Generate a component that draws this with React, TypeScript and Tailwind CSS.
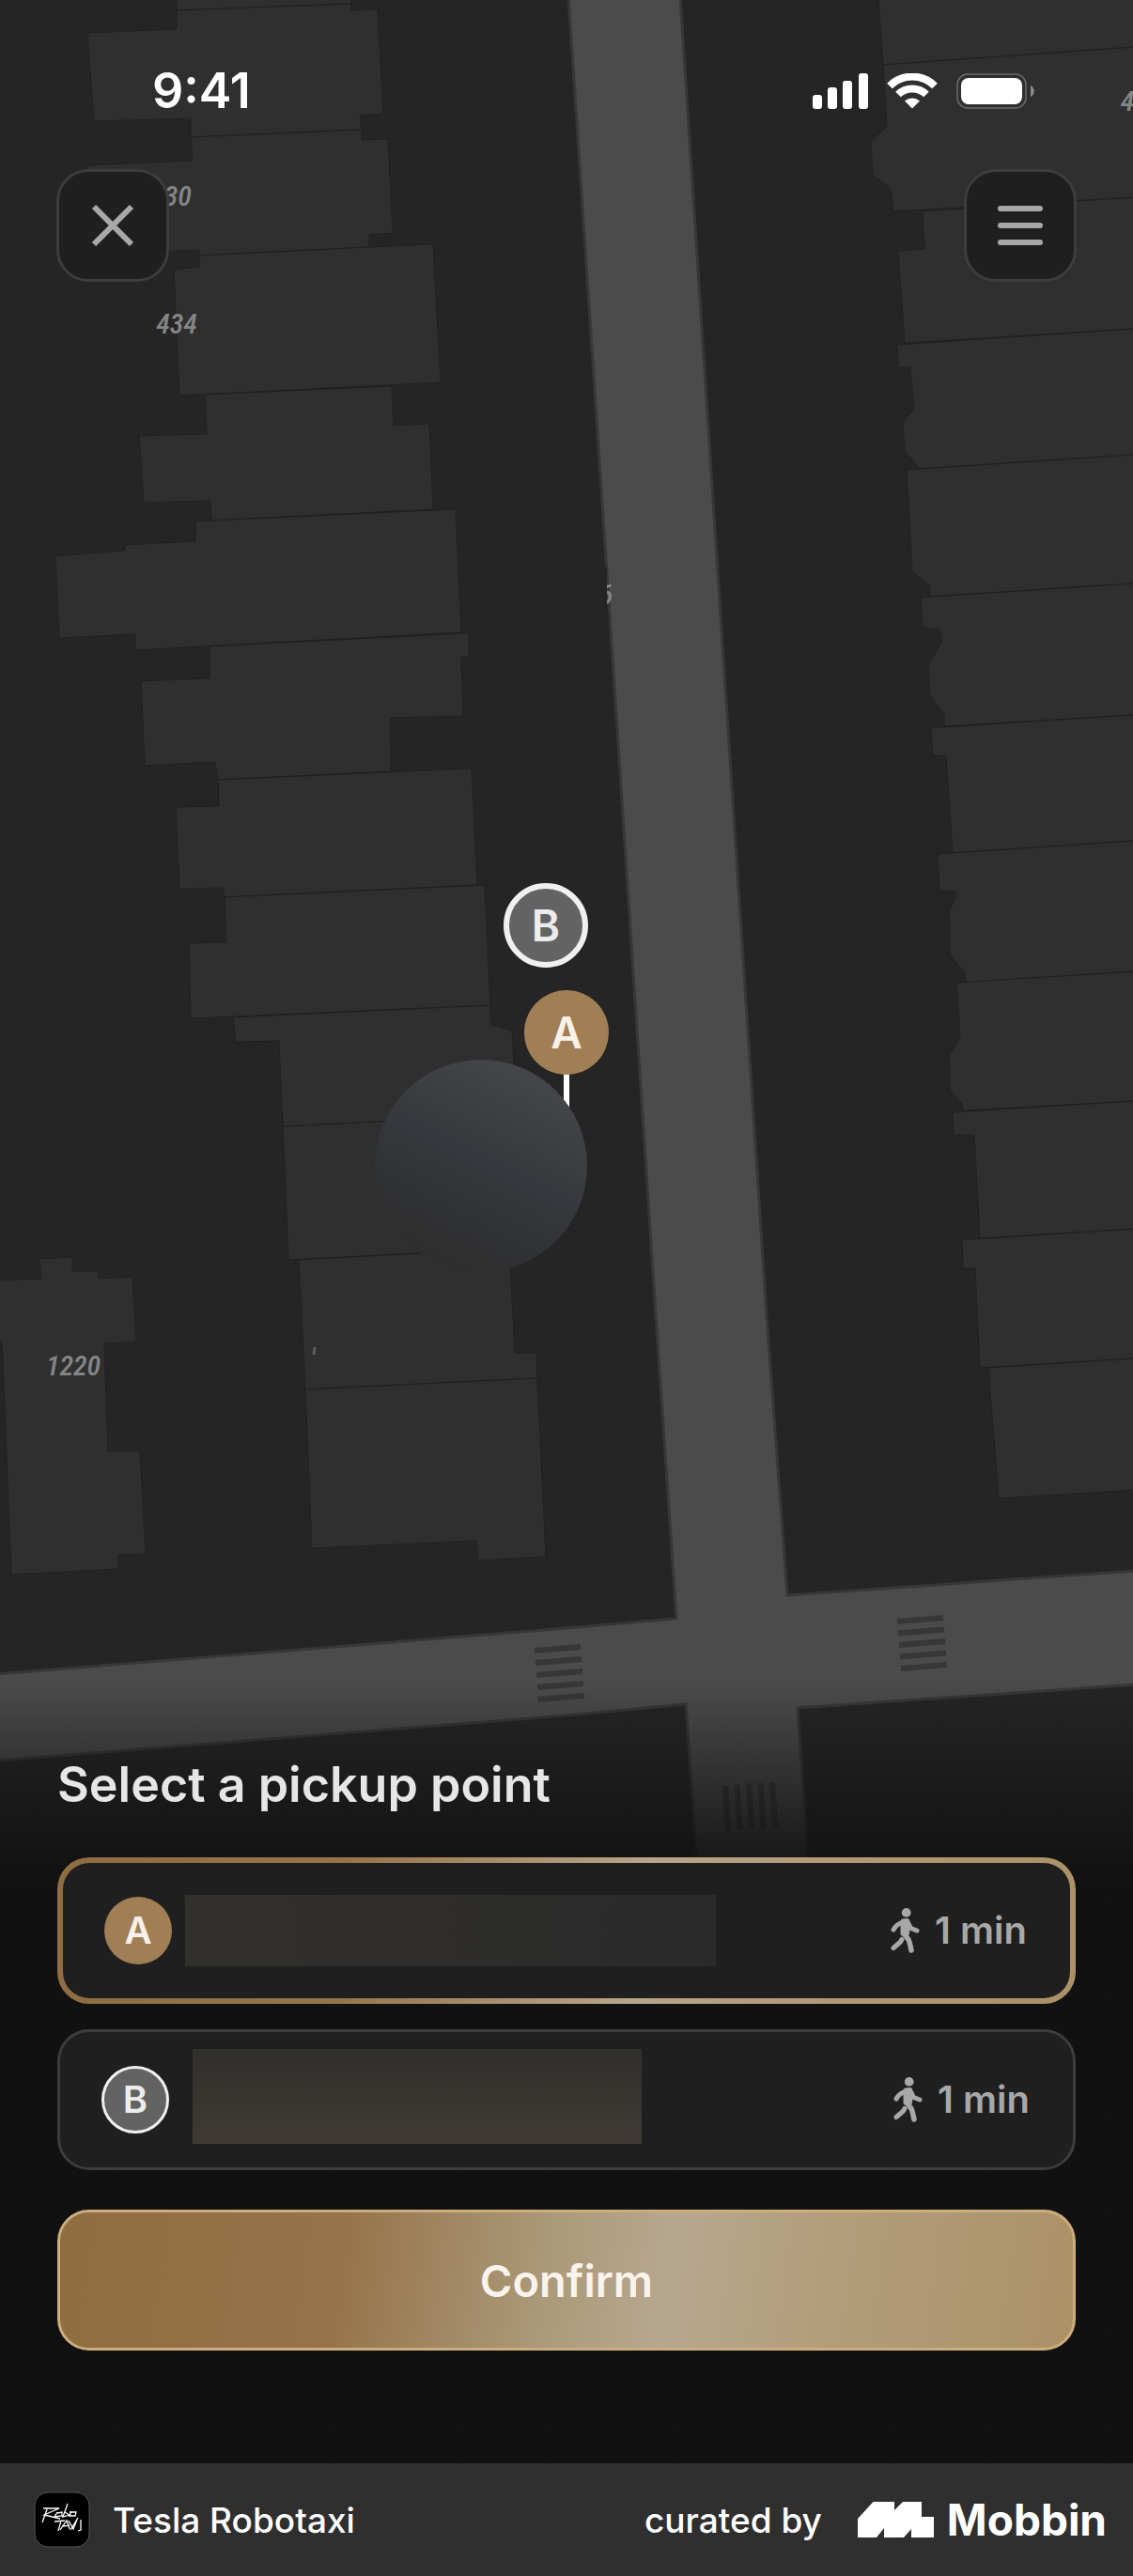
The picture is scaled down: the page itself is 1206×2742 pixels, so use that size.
import { useState } from "react"

const pickupPoints = [
  { id: "A", walk: "1 min" },
  { id: "B", walk: "1 min" },
]

const buildings = [
  "188,-2 188,11 374,4 374,-2",
  "188,11 374,4 374,11 402,10 408,121 383,123 385,138 203,146 203,126 100,129 93,35 188,31",
  "203,146 385,138 385,149 413,148 418,248 393,250 393,263 212,272 212,266 98,271 92,176 205,171",
  "212,272 393,263 461,260 469,407 191,421 185,287 212,284",
  "218,420 417,411 419,453 457,451 461,542 225,554 224,533 153,535 148,464 220,462",
  "208,555 485,542 491,673 144,692 144,675 63,679 59,592 133,586 133,580 208,576",
  "223,688 499,674 499,699 491,700 493,762 415,764 416,821 232,830 229,811 154,815 150,725 223,722",
  "232,830 502,818 508,942 239,955 237,945 191,946 187,859 233,858",
  "239,955 516,942 522,1070 203,1084 201,1004 241,1003",
  "248,1083 522,1070 523,1091 545,1097 550,1187 301,1199 297,1108 251,1109",
  "301,1199 538,1187 542,1329 307,1341",
  "318,1341 542,1329 548,1440 571,1440 572,1467 325,1479",
  "325,1479 572,1467 581,1657 509,1661 507,1640 332,1648",
  "-2,1363 44,1361 42,1340 77,1338 77,1353 105,1353 105,1361 141,1359 145,1428 111,1430 115,1545 149,1544 155,1654 126,1655 126,1670 12,1676 2,1428 -2,1428",
  "935,-2 1208,-2 1208,50 940,69",
  "940,69 1208,50 1208,210 951,225 948,201 929,186 927,150 944,135",
  "982,225 1208,210 1208,350 963,365 956,267 984,265",
  "955,367 1208,350 1208,484 979,499 963,480 961,449 973,435 969,391 956,391",
  "965,500 1208,484 1208,621 990,635 990,624 971,608",
  "980,636 1208,621 1208,761 1005,773 1005,760 990,740 988,707 1003,683 1000,670 982,668",
  "991,775 1208,761 1208,895 1014,908 1007,805 993,804",
  "998,909 1208,895 1208,1034 1028,1046 1027,1036 1011,1015 1010,970 1018,954 1017,949 1000,948",
  "1018,1046 1208,1034 1208,1172 1025,1182 1024,1175 1011,1160 1010,1123 1022,1104",
  "1014,1184 1208,1172 1208,1308 1043,1318 1037,1208 1015,1208",
  "1024,1320 1208,1308 1208,1446 1043,1456 1038,1350 1025,1350",
  "1052,1456 1208,1446 1208,1586 1063,1595",
]

const stripes = [0, 1, 2, 3, 4]

function StreetMap() {
  return (
    <svg
      className="absolute inset-0 size-full"
      viewBox="0 0 1206 2622"
      preserveAspectRatio="xMidYMin slice"
      role="img"
      aria-label="Map of pickup points"
    >
      <defs>
        <linearGradient id="ball" x1="0.75" y1="0.05" x2="0.3" y2="0.95">
          <stop offset="0" stopColor="#454649" />
          <stop offset="0.5" stopColor="#36383d" />
          <stop offset="0.8" stopColor="#303133" />
          <stop offset="1" stopColor="#2e2e2e" />
        </linearGradient>
        <clipPath id="tile">
          <rect x="646" y="600" width="40" height="60" />
        </clipPath>
      </defs>
      <rect width="1206" height="2622" fill="#252525" />
      <g fill="#2f2f2f" stroke="#212121" strokeWidth="1">
        {buildings.map((points) => (
          <polygon key={points} points={points} />
        ))}
      </g>

      <path
        d="M605-4 652 700 698 1400 720 1723 603 1733-4 1782V1874L603 1826 730 1814 741 1974 744 2040H864L860 1974 849 1818 1210 1793V1672L838 1698 816 1400 770 700 724-4Z"
        fill="#4b4b4b"
        stroke="#373737"
        strokeWidth="3"
      />
      <path d="M642 603h4v44l3 12-4-2Z" fill="#252525" />
      <g stroke="#373737" strokeWidth="6">
        {stripes.map((i) => (
          <g key={i}>
            <path d={`M${569 + i} ${1757 + i * 13}l49-4`} />
            <path d={`M${955 + i} ${1726 + i * 12.5}l49-4`} />
            <path d={`M${772 + i * 12.5} ${1901 - i}l3 48`} />
          </g>
        ))}
      </g>

      <g
        fill="#858585"
        fontSize="30"
        fontWeight="500"
        fontStyle="italic"
        textAnchor="middle"
        className="font-['Liberation_Sans_Narrow','Roboto_Condensed',Roboto,sans-serif]"
      >
        <text x="182" y="219">430</text>
        <text x="188" y="355">434</text>
        <text x="78" y="1464">1220</text>
        <text x="1200" y="118">4</text>
        <text x="645" y="643" clipPath="url(#tile)">6</text>
      </g>
      <path d="M335 1434l-1 8" stroke="#5a5a5a" strokeWidth="3" />

      <g fontSize="46" fontWeight="600" textAnchor="middle" className="font-[Inter,sans-serif]">
        <circle cx="581" cy="985" r="42" fill="#636363" stroke="#f0f0f0" strokeWidth="6" />
        <text x="581" y="1002" fill="#ececec">B</text>
        <rect x="600" y="1140" width="6" height="50" fill="#fff" />
        <circle cx="603" cy="1099" r="45" fill="#a07f55" />
        <text x="603" y="1116" fill="#f8f1e9">A</text>
      </g>
      <circle cx="512" cy="1241" r="113" fill="url(#ball)" />
    </svg>
  )
}

function StatusBar() {
  return (
    <div className="flex items-center justify-between pt-[67px] pr-[104px] pl-[162px] text-white">
      <span className="text-[52px] leading-[60px] font-semibold">9:41</span>
      <div className="flex items-center gap-5">
        <svg width="60" height="38" viewBox="0 0 60 38" fill="currentColor" aria-hidden="true">
          <rect x="1" y="23" width="10" height="15" rx="3" />
          <rect x="17" y="15" width="10" height="23" rx="3" />
          <rect x="33" y="8" width="10" height="30" rx="3" />
          <rect x="50" y="0" width="10" height="38" rx="3" />
        </svg>
        <svg width="54" height="38" viewBox="0 0 54 38" aria-hidden="true">
          <g fill="none" stroke="currentColor" strokeWidth="8">
            <path d="M3 13.500A34 34 0 0 1 51 13.500" />
            <path d="M12 22.500A21.500 21.500 0 0 1 42 22.500" />
          </g>
          <path d="M27 37.500 19 29.500A12 12 0 0 1 35 29.500Z" fill="currentColor" />
        </svg>
        <svg width="84" height="38" viewBox="0 0 84 38" aria-hidden="true">
          <rect x="1" y="1" width="73" height="36" rx="11" fill="none" stroke="#6b6b6b" strokeWidth="1.500" />
          <rect x="5" y="5" width="65" height="28" rx="8" fill="currentColor" />
          <path d="M79 13c5 2 5 10 0 12Z" fill="#8a8a8a" />
        </svg>
      </div>
    </div>
  )
}

function WalkIcon() {
  return (
    <svg width="31" height="48" viewBox="0 0 31 48" fill="none" stroke="currentColor" strokeLinecap="round" strokeLinejoin="round" aria-hidden="true">
      <circle cx="16.700" cy="4.900" r="4.900" fill="currentColor" stroke="none" />
      <path d="M14 14.500 8 17.500Q6 18.500 3 23" strokeWidth="5" />
      <path d="M18 14.500 21.500 21.500 28 24" strokeWidth="5" />
      <path d="M13 14 17.500 13.500 18.500 18 17.500 27 13 27Z" fill="currentColor" strokeWidth="5" />
      <path d="M14 27 19 33.500Q20 35 22 45" strokeWidth="5.500" />
      <path d="M12 33.500 10 36.500 3 42.500" strokeWidth="5" />
    </svg>
  )
}

function Sheet() {
  const [selected, setSelected] = useState("A")

  return (
    <form
      className="relative mt-auto bg-linear-to-b from-transparent via-[#111] via-[215px] to-[#111] px-[61px] pt-20 pb-[120px]"
      onSubmit={(e) => e.preventDefault()}
    >
      <fieldset>
        <legend className="mb-[47px] text-[52px] leading-[60px] font-semibold text-[#e6e6e6]">Select a pickup point</legend>
        <div className="flex flex-col gap-[27px]">
          {pickupPoints.map((point) => (
            <label
              key={point.id}
              className={
                selected === point.id
                  ? "flex rounded-[34px] border-6 border-transparent [background:linear-gradient(#1f1f1f,#1f1f1f)_padding-box,linear-gradient(97deg,#8f6d42,#96744a_28%,#b8a48a_57%,#b09570_82%,#ab9166)_border-box]"
                  : "flex rounded-[34px] border-3 border-[#3d3d3d] bg-[#1f1f1f]"
              }
            >
              <input
                type="radio"
                name="pickup"
                value={point.id}
                checked={selected === point.id}
                onChange={() => setSelected(point.id)}
                className="sr-only"
              />
              <span className="flex h-36 flex-1 items-center pr-[46px] pl-11">
                <span
                  className={
                    point.id === "A"
                      ? "flex size-[72px] items-center justify-center rounded-full bg-[#a07f55] text-[40px] leading-none font-semibold text-[#f8f1e9]"
                      : "flex size-[72px] items-center justify-center rounded-full border-3 border-[#f0f0f0] bg-[#636363] text-[40px] leading-none font-semibold text-[#ececec]"
                  }
                >
                  {point.id}
                </span>
                <span
                  className={
                    point.id === "A"
                      ? "ml-3.5 h-[76px] w-[565px] bg-linear-to-r from-[#32302d] to-[#2a2a2a]"
                      : "mb-2 ml-[25px] h-[101px] w-[478px] bg-linear-to-b from-[#302f2c] to-[#403b34]"
                  }
                />
                <span className="ml-auto flex items-center gap-4 text-[40px] leading-none font-semibold text-[#a8a8a8]">
                  <WalkIcon />
                  {point.walk}
                </span>
              </span>
            </label>
          ))}
        </div>
      </fieldset>
      <button
        type="submit"
        className="mt-[42px] h-[150px] w-full rounded-[34px] border-3 border-[#ccae7d] bg-[linear-gradient(98deg,#8f6d40,#96744a_28%,#ab9979_48%,#b7a78f_60%,#b29d7a_76%,#ab9166)] text-[47px] leading-none font-semibold text-[#f8f3ec]"
      >
        Confirm
      </button>
    </form>
  )
}

function Footer() {
  return (
    <footer className="flex h-[120px] items-center justify-between bg-[#2f2f2f] pr-7 pl-9 text-white">
      <div className="flex items-center gap-6">
        <svg width="60" height="60" viewBox="0 0 60 60" aria-hidden="true">
          <rect x="1" y="1" width="58" height="58" rx="14" fill="#000" stroke="#555" strokeWidth="1" />
          <g fill="none" stroke="#fff" strokeWidth="1.300">
            <path d="M10 18 27 18 11 25 28 29M14 19 9 33" />
            <path d="M25 22 22 27 30 26 30 22 25 23M36 13 31 27 38 25 33 22M38 22 45 22 44 26 38 26 40 21" />
            <path d="M22 32 33 31M29 31 26 42M28 41 35 31 38 40M30 37 38 36M37 31 42 40 46 30M39 41 47 28M50 30 50 41 47 42" />
          </g>
        </svg>
        <span className="text-[37px] leading-none font-medium">Tesla Robotaxi</span>
      </div>
      <div className="flex items-center">
        <span className="text-[37px] leading-none font-medium">curated by</span>
        <svg className="mr-3.5 ml-[38px]" width="81" height="38" viewBox="0 0 81 38" fill="currentColor" aria-hidden="true">
          <path d="M16.500 0H39V9L48 0H68V16H81V38H57V29L49 38H28V28L20 38H0V18Z" />
        </svg>
        <span className="text-[46px] leading-none font-bold">Mobbin</span>
      </div>
    </footer>
  )
}

export default function App() {
  return (
    <div className="flex min-h-screen flex-col bg-[#111] font-[Inter,sans-serif]">
      <main className="relative flex flex-1 flex-col overflow-hidden">
        <StreetMap />
        <header className="relative">
          <StatusBar />
          <div className="flex justify-between px-[60px] pt-[53px]">
            <button type="button" aria-label="Close" className="flex size-[120px] items-center justify-center rounded-[34px] border-3 border-[#3d3d3d] bg-[#1f1f1f] text-[#a8a8a8]">
              <svg width="48" height="48" viewBox="0 0 48 48" stroke="currentColor" strokeWidth="6" aria-hidden="true">
                <path d="M4 4 44 44M44 4 4 44" />
              </svg>
            </button>
            <button type="button" aria-label="Menu" className="flex size-[120px] items-center justify-center rounded-[34px] border-3 border-[#3d3d3d] bg-[#1f1f1f] text-[#a8a8a8]">
              <svg width="48" height="48" viewBox="0 0 48 48" stroke="currentColor" strokeWidth="6" strokeLinecap="round" aria-hidden="true">
                <path d="M3 6H45M3 24H45M3 42H45" />
              </svg>
            </button>
          </div>
        </header>
        <Sheet />
      </main>
      <Footer />
    </div>
  )
}
